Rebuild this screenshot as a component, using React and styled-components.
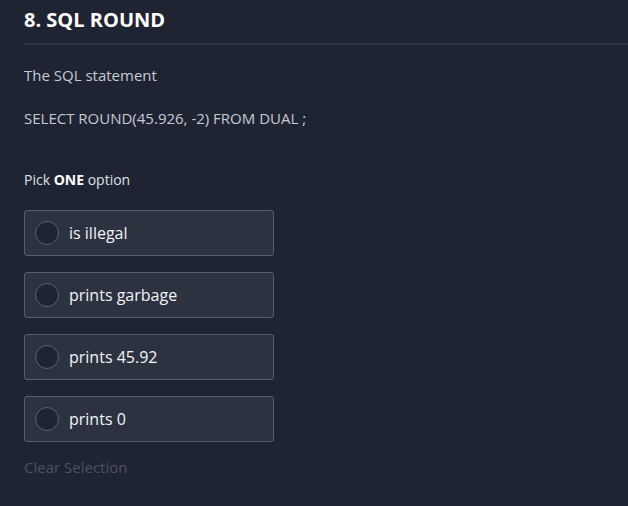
import styled, { createGlobalStyle } from "styled-components"

const GlobalStyle = createGlobalStyle`
    html, body {
        margin: 0;
        padding: 0;
        background: #1f2432;
    }
    body {
        font-family: "Open Sans", "Liberation Sans", sans-serif;
        color: #c5cad3;
    }
`

const Page = styled.div`
    padding: 6px 0 0 24px;
    min-height: 506px;
    box-sizing: border-box;
`

const Title = styled.h1`
    margin: 0;
    font-size: 20px;
    font-weight: 700;
    color: #ffffff;
    line-height: 28px;
    padding-bottom: 9px;
    border-bottom: 2px solid #2e3341;
`

const Text = styled.p`
    margin: ${p => p.$top || 0}px 0 0;
    font-size: 15px;
    line-height: 20px;
    color: ${p => p.$muted ? "#4b5262" : "#c5cad3"};
`

const Hint = styled.p`
    margin: 43px 0 0;
    font-size: 14px;
    line-height: 18px;
    color: #dde1e7;

    b {
        font-weight: 700;
        color: #ffffff;
    }
`

const Options = styled.div`
    display: flex;
    flex-direction: column;
    gap: 16px;
    margin-top: 21px;
    width: 250px;
`

const Option = styled.label`
    display: flex;
    align-items: center;
    gap: 10px;
    height: 46px;
    box-sizing: border-box;
    padding: 0 10px;
    background: #2d3240;
    border: 1px solid #575d69;
    border-radius: 3px;
    font-size: 16px;
    color: #f2f4f7;
    cursor: pointer;
`

const Radio = styled.span`
    width: 24px;
    height: 24px;
    box-sizing: border-box;
    border-radius: 50%;
    border: 1px solid #5c6370;
    background: #1f2432;
    flex-shrink: 0;
`

const options = ["is illegal", "prints garbage", "prints 45.92", "prints 0"]

export default function App() {
    return (
        <>
            <GlobalStyle />
            <Page>
                <Title>8. SQL ROUND</Title>
                <Text $top={20}>The SQL statement</Text>
                <Text $top={23}>SELECT ROUND(45.926, -2) FROM DUAL ;</Text>
                <Hint>Pick <b>ONE</b> option</Hint>
                <Options>
                    {options.map(o => (
                        <Option key={o}>
                            <Radio />
                            {o}
                        </Option>
                    ))}
                </Options>
                <Text $top={15} $muted>Clear Selection</Text>
            </Page>
        </>
    )
}
